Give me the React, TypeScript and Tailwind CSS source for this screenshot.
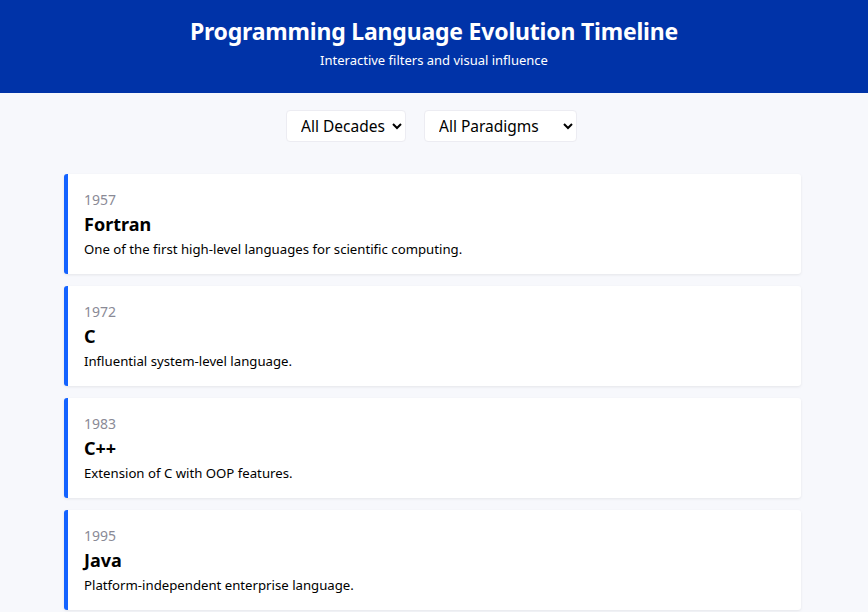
import React from "react";

const items = [
  { year: "1957", name: "Fortran", desc: "One of the first high-level languages for scientific computing." },
  { year: "1972", name: "C", desc: "Influential system-level language." },
  { year: "1983", name: "C++", desc: "Extension of C with OOP features." },
  { year: "1995", name: "Java", desc: "Platform-independent enterprise language." },
];

export default function App() {
  return (
    <div
      className="min-h-screen bg-[#f7f8fc] text-black"
      style={{ fontFamily: '"Noto Sans", "Open Sans", sans-serif' }}
    >
      <header className="bg-[#0033a8] text-white text-center h-[93px] pt-[14px]">
        <h1 className="text-[23px] font-bold leading-[34px] tracking-[-0.2px]">
          Programming Language Evolution Timeline
        </h1>
        <p className="text-[13px] leading-[22px] mt-[1px]">Interactive filters and visual influence</p>
      </header>
      <div className="flex justify-center gap-[18px] mt-[17px] pr-[5px]">
        <select className="w-[120px] h-[32px] bg-white rounded-[4px] border border-[#ececf2] pl-[10px] pr-[4px] text-[15.5px] text-black">
          <option>All Decades</option>
        </select>
        <select className="w-[153px] h-[32px] bg-white rounded-[4px] border border-[#ececf2] pl-[10px] pr-[4px] text-[15.5px] text-black">
          <option>All Paradigms</option>
        </select>
      </div>
      <div className="w-[737px] ml-[64px] mt-[32px] flex flex-col gap-[12px]">
        {items.map((it) => (
          <div
            key={it.name}
            className="bg-white border-l-4 border-[#1463ff] rounded-[3px] shadow-[0_1px_3px_rgba(0,0,0,0.08)] pl-[16px] pt-[16px] pb-[15px]"
          >
            <div className="text-[14px] leading-[20px] text-[#8a8a96]">{it.year}</div>
            <div className="text-[18px] font-bold leading-[24px] mt-[2px]">{it.name}</div>
            <div className="text-[13.2px] leading-[20px] mt-[3px]">{it.desc}</div>
          </div>
        ))}
      </div>
    </div>
  );
}
